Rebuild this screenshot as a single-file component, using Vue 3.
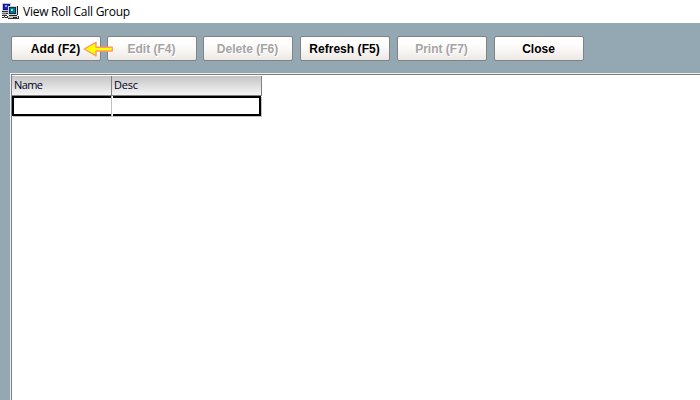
<script setup>
const buttons = [
  { label: 'Add (F2)', disabled: false, kind: 'add' },
  { label: 'Edit (F4)', disabled: true, kind: 'edit' },
  { label: 'Delete (F6)', disabled: true, kind: 'delete' },
  { label: 'Refresh (F5)', disabled: false, kind: 'refresh' },
  { label: 'Print (F7)', disabled: true, kind: 'print' },
  { label: 'Close', disabled: false, kind: 'close' },
]
</script>

<template>
  <div class="window">
    <header class="titlebar">
      <svg class="app-icon" width="18" height="18" viewBox="0 0 18 18" shape-rendering="crispEdges">
        <path d="M1 1h9v8H1z" fill="#c8c8dc" />
        <path d="M2 2h7v6H2z" fill="#10107c" />
        <path d="M3 3h5v4H3z" fill="#2020d0" />
        <path d="M4 3h2v2H4z" fill="#8aa0ff" />
        <path d="M1 9h7v1H1zM1 13h5v1H1zM5 11h2v1H5z" fill="#303030" />
        <path d="M1 10h6v1H1zM1 12h5v1H1z" fill="#c0c0c0" />
        <path d="M1 11h4v1H1z" fill="#707070" />
        <path d="M3 14h1v1H3zM1 15h2v1H1zM4 15h3v1H4z" fill="#303030" />
        <path d="M3 15h1v1H3z" fill="#c8b400" />
        <path d="M7 4h9v9H7z" fill="#d2d2da" />
        <path d="M8 5h7v7H8z" fill="#083048" />
        <path d="M9 6h5v5H9z" fill="#087888" />
        <path d="M10 7h2v2h-2z" fill="#70f0e8" />
        <path d="M16 4h1v9h-1zM8 13h8v1H8z" fill="#202020" />
        <path d="M7 14h10v2H7z" fill="#c4c4c4" />
        <path d="M7 16h10v1H7zM12 15h4v1h-4zM17 14h1v3h-1zM6 14h1v2H6z" fill="#303030" />
      </svg>
      <span class="title">View Roll Call Group</span>
    </header>

    <nav class="toolbar">
      <button v-for="b in buttons" :key="b.kind" :class="['btn', b.kind]" :disabled="b.disabled">
        <span class="label">{{ b.label }}</span>
        <svg v-if="b.kind === 'add'" class="pointer" width="32" height="18" viewBox="0 0 32 18">
          <path d="M1.2 9 L13 2.4 V7.2 H29.3 V11 H13 V15.8 Z" fill="#ffff00" stroke="#ff9a60" stroke-width="1.4" stroke-linejoin="round" />
        </svg>
      </button>
    </nav>

    <main class="grid">
      <div class="head">
        <div class="th name"><span>Name</span></div>
        <div class="th desc"><span>Desc</span></div>
      </div>
      <div class="row">
        <div class="cell first"></div>
        <div class="cell last"></div>
      </div>
    </main>
  </div>
</template>

<style>
body { margin: 0; overflow: hidden; }
</style>

<style scoped>
* { box-sizing: border-box; }
.window {
  width: 700px;
  height: 400px;
  display: flex;
  flex-direction: column;
  overflow: hidden;
  background: #93a8b2;
}
.titlebar {
  height: 23px;
  flex: none;
  display: flex;
  align-items: flex-start;
  padding: 2px 0 0 1px;
  background: #fff;
}
.app-icon { flex: none; }
.title {
  margin-left: 4px;
  font: 12px/20px "Open Sans", "Noto Sans", sans-serif;
  letter-spacing: -0.26px;
  color: #000;
  white-space: nowrap;
}
.toolbar {
  height: 50px;
  flex: none;
  display: flex;
  padding: 13px 0 0 11px;
}
.btn {
  position: relative;
  width: 90px;
  height: 25px;
  margin: 0 6px 0 0;
  padding: 0 1px 0 0;
  display: flex;
  align-items: center;
  justify-content: center;
  border: 1px solid #828282;
  border-radius: 2px;
  background: linear-gradient(#fff, #fdfcfb 40%, #ece8e4);
  font: bold 12px/23px "Liberation Sans", Arial, sans-serif;
  color: #000;
}
.btn.delete, .btn.refresh, .btn.print { margin-right: 7px; }
.btn:disabled { color: #a5a5a5; text-shadow: 1px 1px 0 #fff; }
.label { white-space: nowrap; padding-top: 1px; }
.add .label { letter-spacing: 0.1px; }
.refresh .label { letter-spacing: 0.05px; }
.pointer {
  position: absolute;
  left: 71px;
  top: 3px;
  z-index: 1;
}
.grid {
  flex: 1;
  margin-left: 10px;
  border-top: 1px solid #e9edef;
  border-left: 1px solid #e9edef;
  background: #fff;
  box-shadow: inset 1px 1px 0 #808080;
  padding: 2px 0 0 1px;
}
.head { display: flex; width: 250px; height: 20px; }
.th {
  padding-left: 2px;
  border-right: 1px solid #808080;
  border-bottom: 1px solid #808080;
  background: linear-gradient(#c4c4c4, #f6f6f6);
  font: 11px/18px "Open Sans", "Noto Sans", sans-serif;
  letter-spacing: -0.6px;
  color: #00001c;
}
.name { width: 100px; }
.desc { width: 150px; letter-spacing: -0.2px; }
.row {
  display: flex;
  width: 249px;
  height: 20px;
  background: #fff;
  box-shadow: 1px 1px 0 #c0c0c0;
}
.cell { border: 2px solid #000; }
.first {
  width: 99px;
  border-right: 0;
}
.last {
  flex: 1;
  margin-left: 2px;
  border-left: 0;
  box-shadow: -2px 0 0 #fff, -1px 0 0 #fff;
}
.first { box-shadow: 1px 0 0 #c0c0c0; position: relative; z-index: 1; }
</style>
